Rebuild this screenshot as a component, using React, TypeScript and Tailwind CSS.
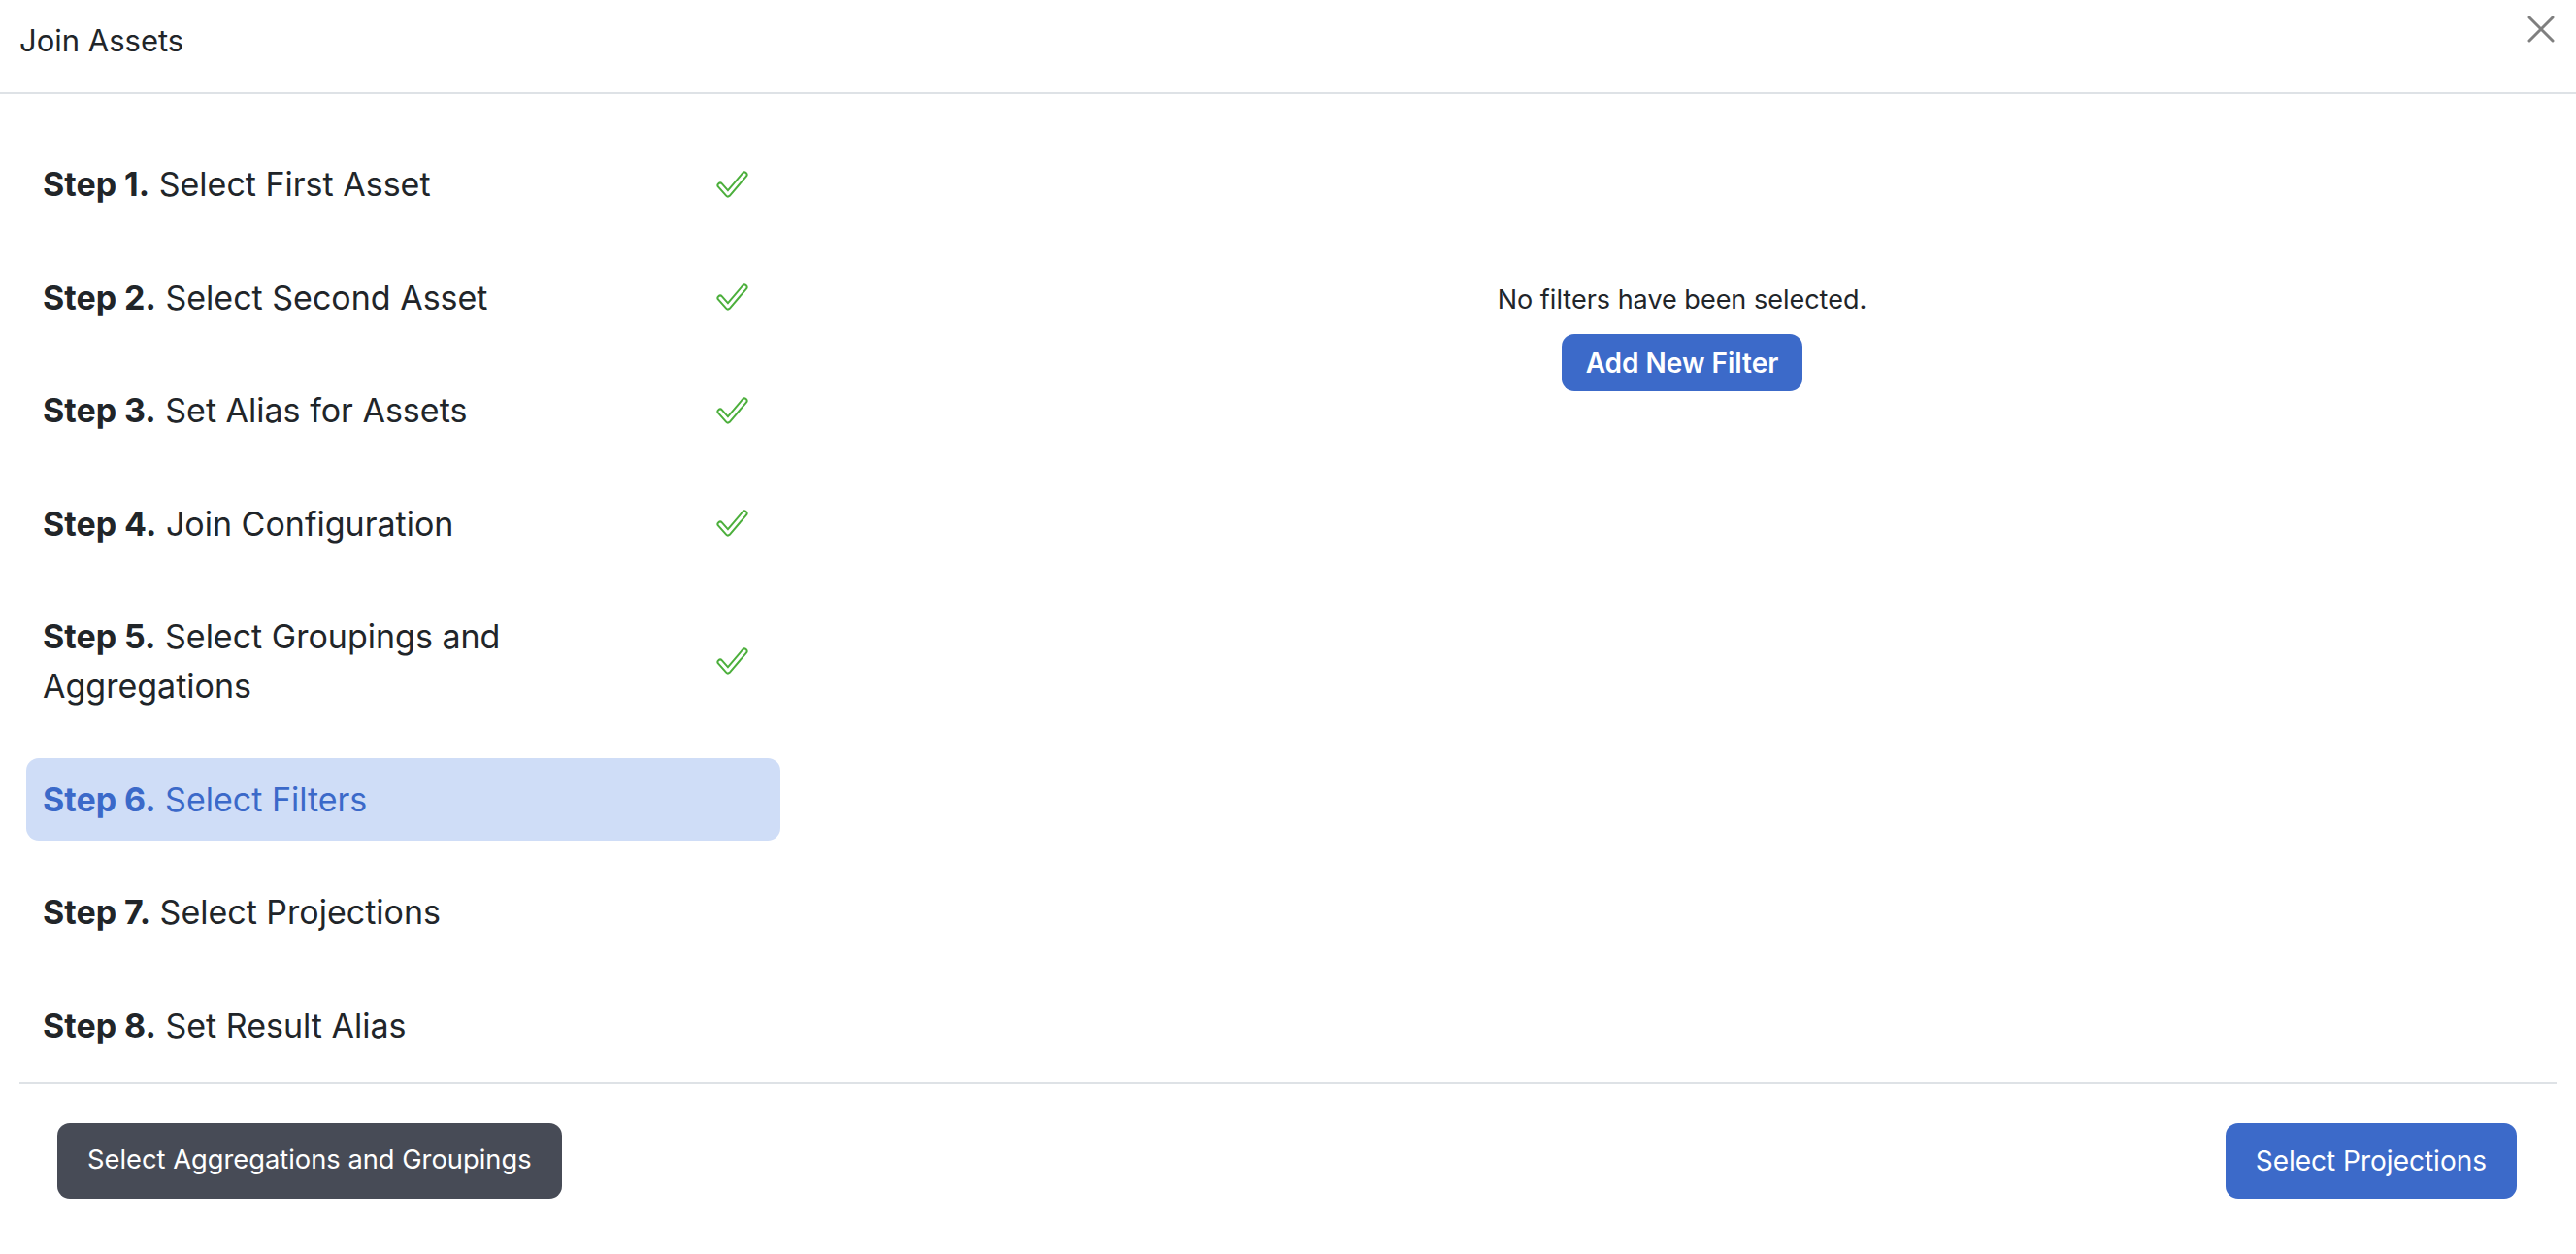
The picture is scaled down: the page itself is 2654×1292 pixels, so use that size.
import React from 'react';

type Step = { label: string; text: string; done: boolean; active?: boolean };

const steps: Step[] = [
    { label: 'Step 1.', text: 'Select First Asset', done: true },
    { label: 'Step 2.', text: 'Select Second Asset', done: true },
    { label: 'Step 3.', text: 'Set Alias for Assets', done: true },
    { label: 'Step 4.', text: 'Join Configuration', done: true },
    { label: 'Step 5.', text: 'Select Groupings and Aggregations', done: true },
    { label: 'Step 6.', text: 'Select Filters', done: false, active: true },
    { label: 'Step 7.', text: 'Select Projections', done: false },
    { label: 'Step 8.', text: 'Set Result Alias', done: false },
];

// hollow check: thick green stroke with a white stroke on top
const HollowCheck: React.FC = () => (
    <svg width="34" height="30" viewBox="0 0 34 30" fill="none">
        <path d="M4 16 L12 25 L29 5" stroke="#4caf3c" strokeWidth="7" strokeLinecap="round" strokeLinejoin="round" />
        <path d="M4 16 L12 25 L29 5" stroke="#ffffff" strokeWidth="3" strokeLinecap="round" strokeLinejoin="round" />
    </svg>
);

export default function App() {
    return (
        <div className="w-full min-h-screen bg-white text-[#212529] font-['Inter','Liberation_Sans',sans-serif]">
            {/* Header */}
            <div className="h-[97px] border-b-2 border-[#dee2e6] flex items-start justify-between pl-[20px] pr-[22px] pt-[16px]">
                <h1 className="mt-[2px] text-[31px] leading-[48px] font-normal">Join Assets</h1>
                <button className="w-[28px] h-[28px] text-[#7f7f7f]">
                    <svg width="28" height="28" viewBox="0 0 28 28" fill="none">
                        <path d="M2 2 L26 26 M26 2 L2 26" stroke="currentColor" strokeWidth="3" strokeLinecap="round" />
                    </svg>
                </button>
            </div>

            {/* Body */}
            <div className="flex">
                <div className="w-[830px] pl-[27px] pr-[26px] pt-[50px] pb-[16px] flex flex-col gap-[31.5px]">
                    {steps.map((s) => (
                        <div
                            key={s.label}
                            className={`flex items-center rounded-[13px] pl-[17px] pr-[32px] py-[17px] ${s.active ? 'bg-[#cfddf7] text-[#3b69c9]' : ''}`}
                        >
                            <p className="flex-1 pr-[60px] text-[34px] leading-[51px]">
                                <span className="font-bold">{s.label}</span> {s.text}
                            </p>
                            {s.done && <HollowCheck />}
                        </div>
                    ))}
                </div>

                <div className="flex-1 pr-[18px] pt-[192px] flex flex-col items-center">
                    <p className="text-[27px] leading-[40px]">No filters have been selected.</p>
                    <button className="mt-[15px] h-[59px] px-[25px] rounded-[13px] bg-[#3c6ac9] text-white text-[28px] font-semibold">
                        Add New Filter
                    </button>
                </div>
            </div>

            {/* Footer */}
            <div className="mx-[20px] border-t-2 border-[#dee2e6] pt-[40px] pb-[56px] pl-[39px] pr-[41px] flex justify-between">
                <button className="h-[78px] px-[31px] rounded-[13px] bg-[#474b56] text-white text-[27.3px]">
                    Select Aggregations and Groupings
                </button>
                <button className="h-[78px] px-[31px] rounded-[13px] bg-[#3c6ac9] text-white text-[28px]">
                    Select Projections
                </button>
            </div>
        </div>
    );
}
